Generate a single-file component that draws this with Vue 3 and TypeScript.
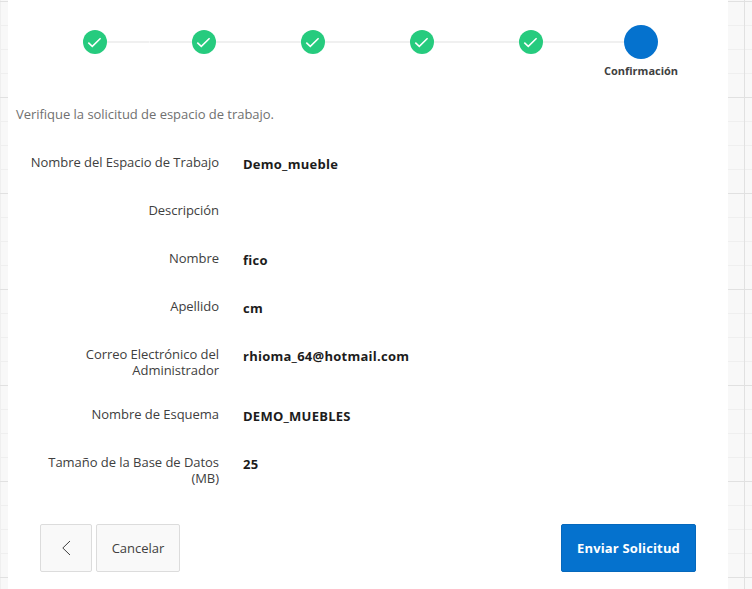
<script setup lang="ts">
interface Field {
  label: string
  value: string
}

const doneSteps: number[] = [1, 2, 3, 4, 5]

const fields: Field[] = [
  { label: 'Nombre del Espacio de Trabajo', value: 'Demo_mueble' },
  { label: 'Descripción', value: '' },
  { label: 'Nombre', value: 'fico' },
  { label: 'Apellido', value: 'cm' },
  { label: 'Correo Electrónico del Administrador', value: 'rhioma_64@hotmail.com' },
  { label: 'Nombre de Esquema', value: 'DEMO_MUEBLES' },
  { label: 'Tamaño de la Base de Datos (MB)', value: '25' },
]
</script>

<template>
  <div class="page">
    <main class="panel">
      <ol class="steps">
        <li v-for="step in doneSteps" :key="step" class="step">
          <span class="marker">
            <svg width="24" height="24" viewBox="0 0 24 24">
              <path d="M5.3 12.6 L9.3 16.4 L17.6 8.2" fill="none" stroke="#fff" stroke-width="1.5" />
            </svg>
          </span>
        </li>
        <li class="step current">
          <span class="marker"></span>
          <span class="step-label">Confirmación</span>
        </li>
      </ol>
      <p class="intro">Verifique la solicitud de espacio de trabajo.</p>
      <dl class="fields">
        <div v-for="field in fields" :key="field.label" class="row">
          <dt>{{ field.label }}</dt>
          <dd>{{ field.value }}</dd>
        </div>
      </dl>
      <footer class="actions">
        <button class="btn back" type="button" aria-label="Anterior">
          <svg width="16" height="16" viewBox="0 0 16 16">
            <path d="M12 1 L4.8 8 L12 15" fill="none" stroke="#404040" stroke-width="1" />
          </svg>
        </button>
        <button class="btn cancel" type="button">Cancelar</button>
        <button class="btn submit" type="button">Enviar Solicitud</button>
      </footer>
    </main>
  </div>
</template>

<style>
body {
  margin: 0;
  overflow: hidden;
}
</style>

<style scoped>
.page {
  box-sizing: border-box;
  height: 589px;
  padding: 0 24px 0 8px;
  font-family: 'Open Sans', 'Noto Sans', sans-serif;
  font-size: 13px;
  color: #404040;
  background-color: #f8f8f8;
  background-image:
    linear-gradient(#e1e1e1 1px, transparent 1px),
    linear-gradient(90deg, #e1e1e1 1px, transparent 1px),
    linear-gradient(#efefef 1px, transparent 1px),
    linear-gradient(90deg, #efefef 1px, transparent 1px);
  background-size: 96px 96px, 96px 96px, 24px 24px, 24px 24px;
  background-position: 0 1px, 72px 0, 0 1px, 0 0;
}
.panel {
  height: 589px;
  background: #fff;
}
.steps {
  display: grid;
  grid-template-columns: repeat(5, 109px) 111px;
  margin: 0;
  padding: 25px 0 0 32.5px;
  height: 73px;
  list-style: none;
}
.step {
  display: flex;
  flex-direction: column;
  align-items: center;
  height: 34px;
  padding-top: 5px;
  box-sizing: border-box;
  background: linear-gradient(#f0f0f0, #f0f0f0) 0 16px / 100% 2px no-repeat;
}
.step:first-child {
  background-position: 100% 16px;
  background-size: 50% 2px;
}
.step.current {
  padding-top: 0;
  background-size: 50% 2px;
}
.marker {
  width: 24px;
  height: 24px;
  flex: none;
  border-radius: 50%;
  background: #26cb7e;
}
.marker svg {
  display: block;
}
.current .marker {
  width: 34px;
  height: 34px;
  background: #0572ce;
}
.step-label {
  margin-top: 4px;
  font-size: 11px;
  line-height: 16px;
  font-weight: 700;
}
.intro {
  margin: 0;
  padding: 8px 8px 16px;
  line-height: 16px;
  letter-spacing: -0.03px;
  color: #707070;
}
.fields {
  margin: 0;
}
.row {
  display: grid;
  grid-template-columns: 195px 1fr;
  column-gap: 24px;
  min-height: 48px;
  padding: 16px 0 12px 16px;
  box-sizing: border-box;
}
dt {
  text-align: right;
  line-height: 16px;
  letter-spacing: -0.04px;
}
dd {
  margin: 2px 0 0;
  line-height: 16px;
  font-weight: 700;
  letter-spacing: 0.25px;
  color: #1c1c1c;
}
.actions {
  display: flex;
  gap: 4px;
  padding: 26px 32px 0;
}
.btn {
  box-sizing: border-box;
  display: flex;
  align-items: center;
  justify-content: center;
  height: 48px;
  padding: 0;
  border: 1px solid #dcdcdc;
  border-radius: 2px;
  background: #f9f9f9;
  font: inherit;
  color: #404040;
}
.back {
  width: 52px;
}
.cancel {
  width: 84px;
}
.submit {
  width: 135px;
  margin-left: auto;
  border-color: #0568bc;
  background: #0572ce;
  font-weight: 700;
  letter-spacing: 0.15px;
  color: #fff;
}
</style>
